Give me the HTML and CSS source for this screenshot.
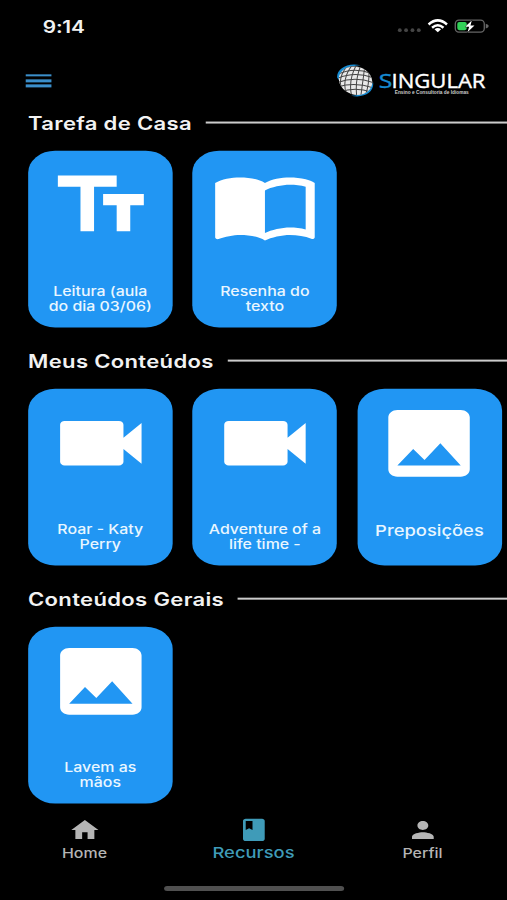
FILE: index.html
```html
<!DOCTYPE html>
<html lang="pt-BR">
<head>
<meta charset="utf-8">
<title>Singular</title>
<link rel="stylesheet" href="styles.css">
</head>
<body>
<svg class="sprite" aria-hidden="true">
  <symbol id="i-text" viewBox="0 0 24 24"><path d="M2.5 4v3h5v12h3V7h5V4zm19 5h-9v3h3v7h3v-7h3z"/></symbol>
  <symbol id="i-book" viewBox="0 0 24 24"><path d="M21 5c-1.11-.35-2.33-.5-3.5-.5-1.95 0-4.05.4-5.5 1.5-1.45-1.1-3.55-1.5-5.5-1.5S2.45 4.9 1 6v14.65c0 .25.25.5.5.5.1 0 .15-.05.25-.05C3.1 20.45 5.05 20 6.5 20c1.95 0 4.05.4 5.5 1.5 1.35-.85 3.8-1.5 5.5-1.5 1.65 0 3.35.3 4.75 1.05.1.05.15.05.25.05.25 0 .5-.25.5-.5V6c-.6-.45-1.25-.75-2-1zm0 13.5c-1.1-.35-2.3-.5-3.5-.5-1.7 0-4.15.65-5.5 1.5V8c1.35-.85 3.8-1.5 5.5-1.5 1.2 0 2.4.15 3.5.5z"/></symbol>
  <symbol id="i-video" viewBox="0 0 24 24"><path d="M17 10.5V7c0-.55-.45-1-1-1H4c-.55 0-1 .45-1 1v10c0 .55.45 1 1 1h12c.55 0 1-.45 1-1v-3.5l4 4v-11z"/></symbol>
  <symbol id="i-image" viewBox="0 0 24 24"><path d="M21 19V5c0-1.1-.9-2-2-2H5c-1.1 0-2 .9-2 2v14c0 1.1.9 2 2 2h14c1.1 0 2-.9 2-2zM8.5 13.5l2.5 3.01L14.5 12l4.5 6H5z"/></symbol>
</svg>
<div class="app">
  <div class="status">
    <span class="time">9:14</span>
    <svg class="signals" viewBox="0 0 94 18" preserveAspectRatio="none">
      <g fill="#454545"><circle cx="3" cy="13" r="1.9"/><circle cx="9.3" cy="13" r="1.9"/><circle cx="15.7" cy="13" r="1.9"/><circle cx="22" cy="13" r="1.9"/></g>
      <g fill="none" stroke="#fff" stroke-width="2.5"><path d="M31.8 7.4Q41 -.8 50.2 7.4"/><path d="M35.3 10.6Q41 5.6 46.7 10.6"/></g>
      <path fill="#fff" d="M37.7 12.2Q41 9.6 44.3 12.2L41 15.2z"/>
      <rect x="58.5" y="3" width="29" height="12" rx="3.6" fill="none" stroke="#666" stroke-width="1.3"/>
      <path fill="#666" d="M89 6.6q3 .6 3 2.4t-3 2.4z"/>
      <rect x="60.5" y="5" width="9.5" height="8" rx="2" fill="#32d158"/>
      <path fill="#fff" stroke="#000" stroke-width=".8" paint-order="stroke" d="M75 3.4L68.4 9.7h4l-1.7 5.4 7-6.8h-4z"/>
    </svg>
  </div>
  <header class="header">
    <div class="menu"><i></i><i></i><i></i></div>
    <svg class="logo" viewBox="0 0 150 36" preserveAspectRatio="none">
      <defs><clipPath id="globe"><ellipse cx="18.8" cy="18.3" rx="17" ry="14" transform="rotate(18 18.8 18.3)"/></clipPath></defs>
      <path fill="#168bd2" d="M.4 15.5C-.5 7 10 -.3 24 3 13 3.2 5 8 2.5 18zM36.3 20c1.5 9-8 16.5-22 13.5C25 33 33 29 36.3 20z"/>
      <g clip-path="url(#globe)">
        <rect width="38" height="36" fill="#e8e8e8"/>
        <g fill="none" stroke="#444" stroke-width="1">
          <path d="M-1 9Q16 0 31 7M-1 13Q16 4 34 11M-1 17Q17 8 38 16M-1 21Q18 13 38 21M0 25Q18 19 38 26M3 30Q18 24 35 30"/>
          <path d="M12 2Q-1 16 6 30M16 2Q4 17 10 33M20 2Q11 18 15 34M24 3Q18 18 20 34M28 4Q26 20 24 34M32 6Q33 20 29 32"/>
        </g>
      </g>
      <g>
        <text x="42" y="25.4" font-family="Open Sans, sans-serif" font-size="20.3" fill="#168bd2" stroke="#168bd2" stroke-width=".4" textLength="13.5" lengthAdjust="spacingAndGlyphs">S</text>
        <text x="54.7" y="25.4" font-family="Open Sans, sans-serif" font-size="20.3" fill="#fff" stroke="#fff" stroke-width=".4" textLength="94" lengthAdjust="spacingAndGlyphs">INGULAR</text>
        <text x="58" y="31.9" font-family="Liberation Sans, sans-serif" font-size="4.8" font-weight="700" fill="#ccc" textLength="74" lengthAdjust="spacingAndGlyphs">Ensino e Consultoria de Idiomas</text>
      </g>
    </svg>
  </header>
  <main class="content">
    <section class="section">
      <div class="heading"><h2>Tarefa de Casa</h2><span class="rule"></span></div>
      <div class="cards">
        <article class="card"><svg class="icon"><use href="#i-text"/></svg><p>Leitura (aula<br>do dia 03/06)</p></article>
        <article class="card"><svg class="icon"><use href="#i-book"/></svg><p>Resenha do<br>texto</p></article>
      </div>
    </section>
    <section class="section">
      <div class="heading"><h2>Meus Conteúdos</h2><span class="rule"></span></div>
      <div class="cards">
        <article class="card"><svg class="icon"><use href="#i-video"/></svg><p>Roar - Katy<br>Perry</p></article>
        <article class="card"><svg class="icon"><use href="#i-video"/></svg><p>Adventure of a<br>life time -</p></article>
        <article class="card"><svg class="icon"><use href="#i-image"/></svg><p class="large">Preposições</p></article>
      </div>
    </section>
    <section class="section">
      <div class="heading"><h2>Conteúdos Gerais</h2><span class="rule"></span></div>
      <div class="cards">
        <article class="card"><svg class="icon"><use href="#i-image"/></svg><p>Lavem as<br>mãos</p></article>
      </div>
    </section>
  </main>
  <nav class="tabs">
    <a class="tab"><svg viewBox="0 0 24 24"><path d="M10 20v-6h4v6h5v-8h3L12 3 2 12h3v8z"/></svg><span>Home</span></a>
    <a class="tab active"><svg viewBox="0 0 24 24"><path fill-rule="evenodd" d="M18 2H6c-1.1 0-2 .9-2 2v16c0 1.1.9 2 2 2h12c1.1 0 2-.9 2-2V4c0-1.1-.9-2-2-2zM6 4h5v8l-2.5-1.5L6 12z"/></svg><span>Recursos</span></a>
    <a class="tab"><svg viewBox="0 0 24 24"><path d="M12 12c2.21 0 4-1.79 4-4s-1.79-4-4-4-4 1.79-4 4 1.79 4 4 4zm0 2c-2.67 0-8 1.34-8 4v2h16v-2c0-2.66-5.33-4-8-4z"/></svg><span>Perfil</span></a>
  </nav>
  <div class="home-bar"></div>
</div>
</body>
</html>
```

FILE: styles.css
```css
* { box-sizing: border-box; }
html, body { margin: 0; width: 507px; height: 900px; overflow: hidden; background: #000; }
.sprite { display: none; }

/* A 414 x 896 layout stretched to fill the viewport. */
.app {
  width: 414px;
  height: 896px;
  display: flex;
  flex-direction: column;
  overflow: hidden;
  transform: scale(1.224638, 1.004464);
  transform-origin: 0 0;
  background: #000;
  color: #f2f2f2;
  font-family: Inter, "Liberation Sans", sans-serif;
}

.status {
  height: 52px;
  flex: none;
  display: flex;
  justify-content: space-between;
  padding: 17px 13.4px 0 35px;
}
.time { font-size: 17px; line-height: 20px; font-weight: 600; letter-spacing: -0.2px; }
.signals { width: 76.76px; height: 18px; }

.header {
  height: 58px;
  flex: none;
  display: flex;
  justify-content: space-between;
  align-items: flex-start;
  padding: 10px 16.5px 0 21.3px;
}
.menu { display: flex; flex-direction: column; gap: 2.9px; width: 20.3px; padding-top: 11.5px; }
.menu i { height: 2.6px; background: #3b8fcb; }
.logo { width: 122.5px; height: 35.84px; }

.content { height: 692px; flex: none; padding-left: 22.9px; overflow: hidden; }
.section { height: 237px; }
.heading { height: 24px; display: flex; align-items: center; gap: 11px; margin-bottom: 15.6px; }
.heading h2 { margin: 0; padding-top: 1.6px; font-size: 18px; line-height: 24px; font-weight: 600; letter-spacing: 0.27px; white-space: nowrap; }
.rule { flex: 1; height: 2px; background: #ccc; }

.cards { display: flex; gap: 16.4px; }
.card {
  flex: none;
  width: 118px;
  height: 176.4px;
  padding-top: 10.6px;
  border-radius: 22px;
  background: #2196f3;
  color: #e9f6ff;
  display: flex;
  flex-direction: column;
  align-items: center;
}
.icon { width: 88.7px; height: 88.7px; fill: #fff; }
.card p {
  margin: 34px 0 0;
  font-size: 13px;
  line-height: 15.2px;
  font-weight: 500;
  text-align: center;
  white-space: nowrap;
}
.card p.large { font-size: 15px; line-height: 18px; }

.tabs { height: 78px; flex: none; display: flex; padding-top: 11px; }
.tab { flex: 1; display: flex; flex-direction: column; align-items: center; color: #b5b5b5; font-size: 13px; line-height: 16px; font-weight: 500; }
.tab svg { width: 26.6px; height: 26.6px; fill: currentColor; }
.tab span { margin-top: 1.8px; }
.active { color: #3f9bb8; font-size: 15px; }
.home-bar { width: 147.5px; height: 5.5px; margin: 1.6px 0 0 133.5px; border-radius: 3px; background: #505050; }
```
